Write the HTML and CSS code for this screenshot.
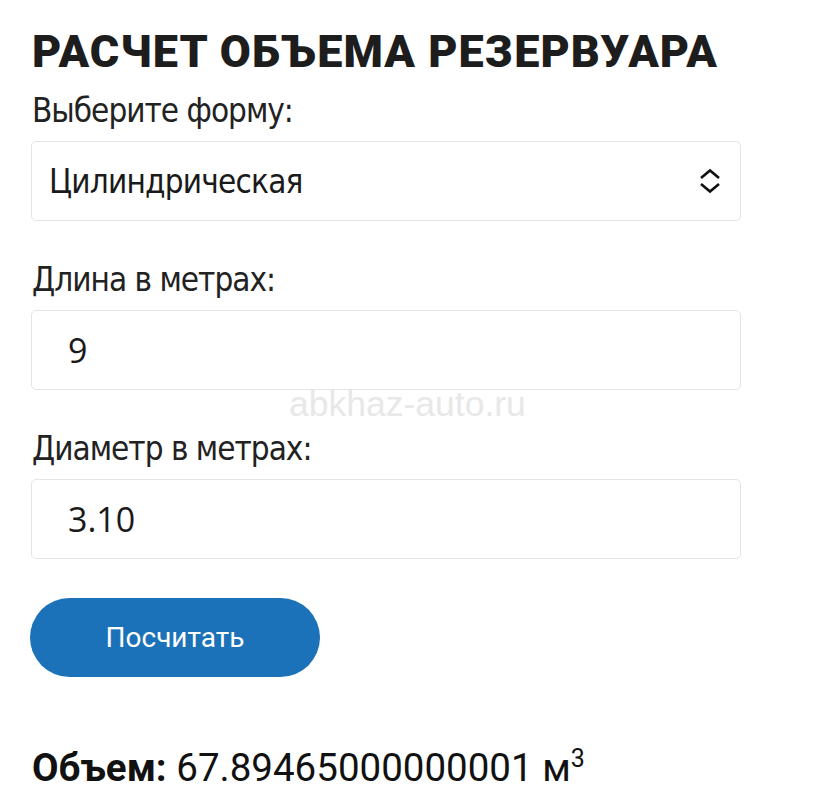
FILE: index.html
```html
<!DOCTYPE html>
<html lang="ru">
<head>
  <meta charset="UTF-8">
  <meta name="viewport" content="width=device-width, initial-scale=1.0">
  <title>Расчет объема резервуара</title>
  <link rel="stylesheet" href="styles.css">
</head>
<body>
  <div class="calc">
    <h1>Расчет объема резервуара</h1>
    <div class="form-group">
      <label for="shape">Выберите форму:</label>
      <div class="select-box">
        <span id="shape">Цилиндрическая</span>
        <svg class="chevrons" width="28" height="28" viewBox="0 0 28 28">
          <path d="M5 11 L14 3.5 L23 11 M5 17 L14 24.5 L23 17" fill="none" stroke="#111" stroke-width="2.6"/>
        </svg>
      </div>
    </div>
    <div class="form-group">
      <label for="length">Длина в метрах:</label>
      <input type="text" id="length" value="9">
    </div>
    <div class="watermark">abkhaz-auto.ru</div>
    <div class="form-group">
      <label for="diameter">Диаметр в метрах:</label>
      <input type="text" id="diameter" value="3.10">
    </div>
    <button class="calc-btn">Посчитать</button>
    <p class="result"><b>Объем:</b> 67.89465000000001 м<sup>3</sup></p>
  </div>
</body>
</html>
```
FILE: styles.css
```css
body {
  margin: 0;
  background: #fff;
  color: #1a1a1a;
  font-family: Roboto, sans-serif;
}
.calc {
  position: relative;
  width: 710px;
  padding: 24px 0 0 31px;
}
.calc h1 {
  margin: 0 0 11px 1px;
  font-family: Roboto, sans-serif;
  font-weight: 900;
  font-size: 45px;
  line-height: 56px;
  letter-spacing: 1.05px;
  text-transform: uppercase;
  color: #1d1d1d;
}
.form-group {
  margin-bottom: 39px;
}
.form-group label {
  display: block;
  font-family: "Liberation Sans Narrow", "DejaVu Sans Condensed", sans-serif;
  font-size: 33px;
  line-height: 40px;
  letter-spacing: -1px;
  margin: 0 0 10px 1px;
  color: #222;
}
.select-box {
  height: 78px;
  border: 1px solid #e4e4e4;
  border-radius: 5px;
  display: flex;
  align-items: center;
  justify-content: space-between;
  padding: 0 16px 0 17px;
  font-family: "Liberation Sans Narrow", "DejaVu Sans Condensed", sans-serif;
  font-size: 33px;
  letter-spacing: -0.8px;
  color: #1a1a1a;
}
.chevrons {
  display: block;
}
.form-group input {
  display: block;
  width: 100%;
  height: 80px;
  box-sizing: border-box;
  border: 1px solid #e4e4e4;
  border-radius: 5px;
  padding: 0 36px;
  font-family: "Open Sans", sans-serif;
  font-size: 34px;
  color: #1a1a1a;
  outline: none;
}
.watermark {
  position: absolute;
  left: 289px;
  top: 384px;
  font-family: "Liberation Sans", Arial, sans-serif;
  font-size: 35.5px;
  color: #e8e8e8;
}
.calc-btn {
  display: block;
  width: 290px;
  height: 79px;
  margin: 0 0 0 -1px;
  border: none;
  border-radius: 40px;
  background: #1c72b8;
  color: #fff;
  font-family: Roboto, sans-serif;
  font-size: 28px;
}
.result {
  margin: 67px 0 0 1px;
  font-family: Roboto, sans-serif;
  font-size: 38.5px;
  color: #111;
}
.result b {
  font-weight: 700;
}
.result sup {
  font-size: 25px;
}
```
